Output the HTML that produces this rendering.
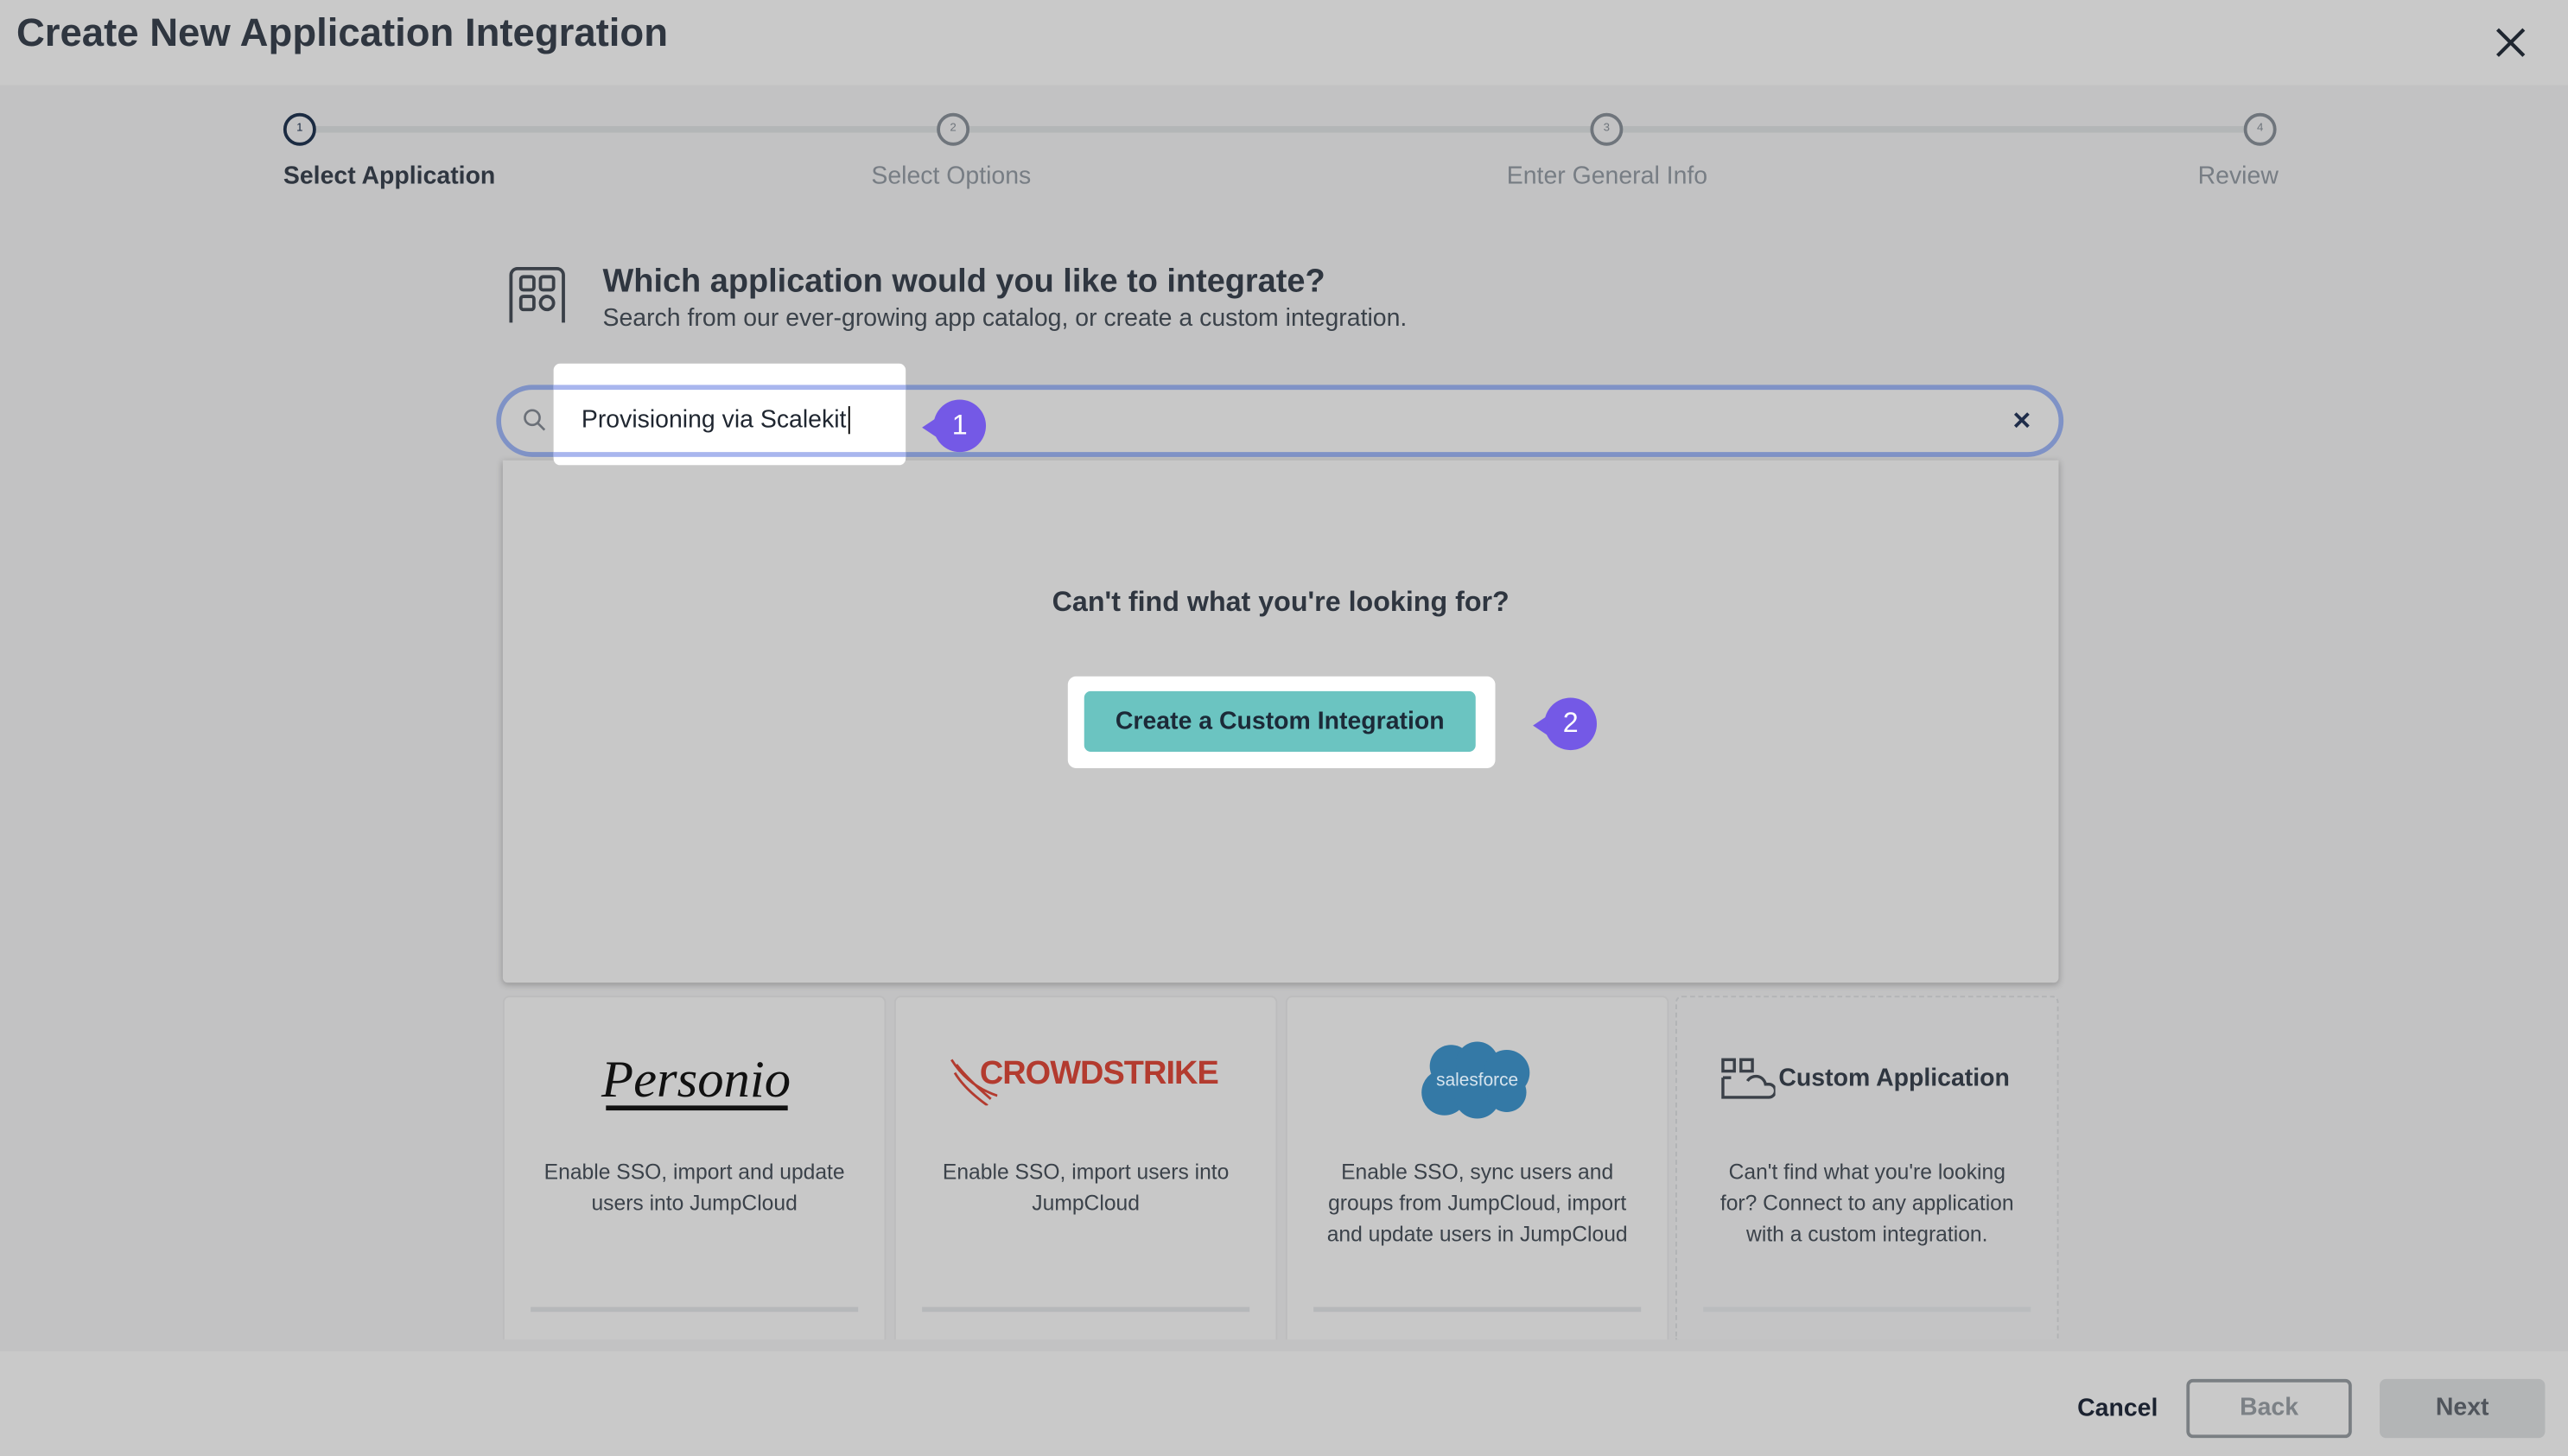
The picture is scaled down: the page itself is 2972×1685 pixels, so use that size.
<!DOCTYPE html>
<html><head><meta charset="utf-8"><style>
*{box-sizing:border-box;margin:0;padding:0}
html,body{width:2972px;height:1684px;overflow:hidden;background:#c2c2c3}
#w{position:absolute;left:0;top:0;width:1568px;height:888.5px;transform:scale(1.8954);transform-origin:0 0;font-family:"Liberation Sans",sans-serif;color:#2f3640;background:#c2c2c3}
.a{position:absolute}
.c{transform:translate(-50%,-50%);white-space:nowrap}
.step{position:absolute;width:20px;height:20px;border-radius:50%;border:2px solid #6f757c;top:69px;font-size:7px;text-align:center;line-height:16px;color:#6f757c;background:#c2c2c3}
.lbl{position:absolute;top:99px;font-size:15px;color:#777d84;white-space:nowrap}
.card{position:absolute;top:608px;width:234px;height:210px;background:#c8c8c8;border:1px solid #bcbcbd;border-bottom:none;border-radius:4px 4px 0 0}
.desc{position:absolute;top:97px;left:0;right:0;text-align:center;font-size:13px;line-height:19px;color:#3b424a}
.bar{position:absolute;top:189px;left:16px;right:16px;height:3px;background:#b6b8ba}
.badge{position:absolute;width:32px;height:32px;border-radius:50%;background:#7459e6;color:#fff;font-size:17px;text-align:center;line-height:32px}
.badge:before{content:"";position:absolute;left:-7px;top:11px;border:6px solid transparent;border-right:9px solid #7459e6;border-left:none;width:0;height:0;}
</style></head><body><div id="w">
<div class="a" style="left:0;top:0;width:1568px;height:52px;background:#c9c9c9"></div>
<div class="a" style="left:10px;top:7px;font-size:24px;font-weight:bold;color:#2f3640">Create New Application Integration</div>
<svg class="a" style="left:1523px;top:16px" width="20" height="20" viewBox="0 0 20 20"><path d="M2 2L18 18M18 2L2 18" stroke="#1f2630" stroke-width="2.2"/></svg>

<div class="a" style="left:183px;top:77px;width:1197px;height:4px;background:#b3b6b7"></div>
<div class="step" style="left:173px;border-color:#1b2b42;color:#1b2b42">1</div>
<div class="step" style="left:572px">2</div>
<div class="step" style="left:971px">3</div>
<div class="step" style="left:1370px">4</div>
<div class="lbl" style="left:173px;color:#2f3640;font-weight:bold">Select Application</div>
<div class="lbl" style="left:532px">Select Options</div>
<div class="lbl" style="left:920px">Enter General Info</div>
<div class="lbl" style="left:1342px">Review</div>

<svg class="a" style="left:310px;top:162px" width="37" height="36" viewBox="0 0 37 36"><path d="M2 35V6a4 4 0 0 1 4-4h24a4 4 0 0 1 4 4v29" fill="none" stroke="#3a4048" stroke-width="2"/><rect x="8" y="7" width="8" height="8" rx="1.5" fill="none" stroke="#3a4048" stroke-width="2"/><rect x="20" y="7" width="8" height="8" rx="1.5" fill="none" stroke="#3a4048" stroke-width="2"/><rect x="8" y="19" width="8" height="8" rx="1.5" fill="none" stroke="#3a4048" stroke-width="2"/><circle cx="24" cy="23" r="4" fill="none" stroke="#3a4048" stroke-width="2"/></svg>
<div class="a" style="left:368px;top:161px;font-size:20px;font-weight:bold;color:#2f3640">Which application would you like to integrate?</div>
<div class="a" style="left:368px;top:186px;font-size:15px;color:#3b424a">Search from our ever-growing app catalog, or create a custom integration.</div>

<div class="a" style="left:303px;top:235px;width:957px;height:44px;border:3px solid #7f92c6;border-radius:22px;background:#c8c8c8"></div>
<svg class="a" style="left:319px;top:249px" width="15" height="15" viewBox="0 0 15 15"><circle cx="6" cy="6" r="4.5" fill="none" stroke="#6b7078" stroke-width="1.4"/><path d="M9.3 9.3L13.5 13.5" stroke="#6b7078" stroke-width="1.4"/></svg>
<div class="badge" style="left:570px;top:244px">1</div>
<svg class="a" style="left:1229px;top:251px" width="11" height="11" viewBox="0 0 11 11"><path d="M1.5 1.5L9.5 9.5M9.5 1.5L1.5 9.5" stroke="#1f2d4a" stroke-width="2"/></svg>

<div class="a" style="left:307px;top:281px;width:950px;height:319px;background:#c8c8c8;box-shadow:0 1px 4px rgba(0,0,0,.25);border-radius:0 0 3px 3px"></div>

<div class="a" style="left:338px;top:222px;width:215px;height:62px;background:#fff;border-radius:4px"></div>
<div class="a" style="left:338px;top:235px;width:215px;height:44px;border-top:3px solid #a9b6ee;border-bottom:3px solid #a9b6ee;"></div>
<div class="a" style="left:355px;top:248px;font-size:15px;color:#1f2630">Provisioning via Scalekit<span style="border-left:1px solid #000;margin-left:1px"></span></div>

<div class="a c" style="left:782px;top:368px;font-size:17px;font-weight:bold;color:#2f3640">Can't find what you're looking for?</div>
<div class="a" style="left:652px;top:413px;width:261px;height:56px;background:#fff;border-radius:5px"></div>
<div class="a" style="left:662px;top:422px;width:239px;height:37px;background:#6bc4c1;border-radius:4px;text-align:center;line-height:37px;font-size:15px;font-weight:bold;color:#1c2a38">Create a Custom Integration</div>
<div class="badge" style="left:943px;top:426px">2</div>

<div class="card" style="left:307px"><div class="a c" style="left:117px;top:50px;font-family:'Liberation Serif',serif;font-style:italic;font-size:32px;color:#111">Personio</div><div class="a" style="left:62px;top:66px;width:111px;height:3px;background:#111"></div><div class="desc">Enable SSO, import and update<br>users into JumpCloud</div><div class="bar"></div></div>
<div class="card" style="left:546px"><svg class="a" style="left:32px;top:36px" width="30" height="30" viewBox="0 0 30 30"><path d="M2 2Q12 18 30 24M5 5Q12 14 26 26M4 10Q10 20 24 30" stroke="#b33b2f" stroke-width="1.5" fill="none"/></svg><div class="a c" style="left:124px;top:47px;font-size:20px;font-weight:bold;color:#b33b2f;letter-spacing:-0.5px">CROWDSTRIKE</div><div class="desc">Enable SSO, import users into<br>JumpCloud</div><div class="bar"></div></div>
<div class="card" style="left:785px"><svg class="a" style="left:80px;top:26px" width="72" height="50" viewBox="0 0 72 50"><g fill="#3479a6"><circle cx="20" cy="16" r="13"/><circle cx="36" cy="14" r="13"/><circle cx="54" cy="20" r="14"/><circle cx="16" cy="32" r="14"/><circle cx="36" cy="34" r="14"/><circle cx="54" cy="32" r="12"/></g><text x="36" y="28" font-size="11" fill="#d6e4ee" text-anchor="middle" font-family="Liberation Sans,sans-serif">salesforce</text></svg><div class="desc">Enable SSO, sync users and<br>groups from JumpCloud, import<br>and update users in JumpCloud</div><div class="bar"></div></div>
<div class="card" style="left:1023px;border:1px dashed #b1b3b5;border-bottom:none;background:#c4c4c5"><svg class="a" style="left:26px;top:36px" width="34" height="28" viewBox="0 0 34 28"><rect x="2" y="2" width="7" height="7" fill="none" stroke="#3a4048" stroke-width="1.8"/><rect x="13" y="2" width="7" height="7" fill="none" stroke="#3a4048" stroke-width="1.8"/><path d="M2 13h5M2 13v12h28a4 4 0 0 0 0-8h-2a6 6 0 0 0-11-2" fill="none" stroke="#3a4048" stroke-width="1.8"/></svg><div class="a" style="left:62px;top:41px;font-size:15px;font-weight:bold;color:#2f3640">Custom Application</div><div class="desc">Can't find what you're looking<br>for? Connect to any application<br>with a custom integration.</div><div class="bar" style="background:#babcbe"></div></div>

<div class="a" style="left:0;top:825px;width:1568px;height:64px;background:#c9c9c9"></div>
<div class="a c" style="left:1293px;top:860px;font-size:15px;font-weight:bold;color:#1b2230">Cancel</div>
<div class="a" style="left:1335px;top:842px;width:101px;height:36px;border:2px solid #7a7f83;border-radius:4px;text-align:center;line-height:32px;font-size:15px;font-weight:bold;color:#7c8186">Back</div>
<div class="a" style="left:1453px;top:842px;width:101px;height:36px;background:#b3b5b6;border-radius:4px;text-align:center;line-height:36px;font-size:15px;font-weight:bold;color:#50555c">Next</div>
</div></body></html>
